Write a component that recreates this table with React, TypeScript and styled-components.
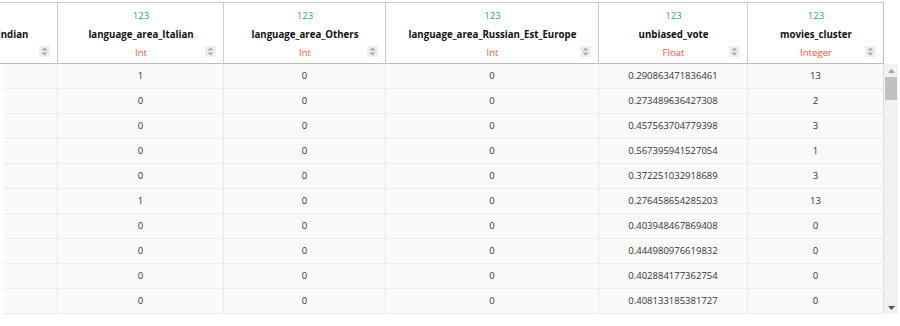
import React from 'react';
import styled, { createGlobalStyle } from 'styled-components';

const GlobalStyle = createGlobalStyle`
  html, body {
    margin: 0;
    padding: 0;
    background: #ffffff;
  }
  body {
    font-family: 'Open Sans', 'Noto Sans', sans-serif;
    color: #333;
  }
`;

type Column = {
  name: string;
  type: string;
  width: number;
  values: string[];
};

const zeros = Array(10).fill('0');

const columns: Column[] = [
  { name: 'language_area_Indian', type: 'Int', width: 164, values: zeros },
  { name: 'language_area_Italian', type: 'Int', width: 166, values: ['1', '0', '0', '0', '0', '1', '0', '0', '0', '0'] },
  { name: 'language_area_Others', type: 'Int', width: 162, values: zeros },
  { name: 'language_area_Russian_Est_Europe', type: 'Int', width: 213, values: zeros },
  {
    name: 'unbiased_vote',
    type: 'Float',
    width: 149,
    values: [
      '0.290863471836461',
      '0.273489636427308',
      '0.457563704779398',
      '0.567395941527054',
      '0.372251032918689',
      '0.276458654285203',
      '0.403948467869408',
      '0.444980976619832',
      '0.402884177362754',
      '0.408133185381727',
    ],
  },
  { name: 'movies_cluster', type: 'Integer', width: 136, values: ['13', '2', '3', '1', '3', '13', '0', '0', '0', '0'] },
];

// how far the grid is scrolled to the right
const SCROLL_X = 106;

const Page = styled.div`
  padding-top: 2px;
  width: 900px;
`;

const HeaderViewport = styled.div`
  width: 884px;
  overflow: hidden;
  border-top: 1px solid #c6c6c6;
  border-bottom: 1px solid #bdbdbd;
`;

const Track = styled.div<{ $shift: number }>`
  display: flex;
  flex: 1;
  margin-left: ${({ $shift }) => -$shift}px;
`;

const HeadCell = styled.div<{ $w: number }>`
  flex: 0 0 ${({ $w }) => $w}px;
  box-sizing: border-box;
  height: 60px;
  padding: 4px 7px 1px 8px;
  border-right: 1px solid #cfcfcf;
  display: flex;
  flex-direction: column;
  background: #fff;
  &:last-child {
    border-right-color: #bdbdbd;
  }
`;

const HeadLine = styled.div`
  height: 18px;
  line-height: 18px;
  text-align: center;
  white-space: nowrap;
`;

const KindIcon = styled(HeadLine)`
  color: #2ea87a;
  font-size: 9.6px;
`;

const ColName = styled(HeadLine)`
  height: 19px;
  line-height: 19px;
  color: #111;
  font-weight: 700;
  font-size: 9.7px;
`;

const TypeRow = styled.div`
  height: 18px;
  display: grid;
  grid-template-columns: 1fr auto 1fr;
  align-items: center;
`;

const TypeName = styled.span`
  grid-column: 2;
  color: #ff5533;
  font-size: 9.6px;
  line-height: 18px;
`;

const SortButton = styled.div`
  grid-column: 3;
  justify-self: end;
  align-self: start;
  margin-top: 2px;
  width: 11px;
  height: 11px;
  background: #efefef;
  display: flex;
  align-items: center;
  justify-content: center;
`;

const Body = styled.div`
  display: flex;
  height: 250px;
`;

const BodyViewport = styled.div`
  margin-left: 4px;
  width: 880px;
  overflow: hidden;
`;

const Row = styled.div`
  display: flex;
  height: 25px;
  box-sizing: border-box;
  border-bottom: 1px solid #ececec;
  background: #fafafa;
`;

const Cell = styled.div<{ $w: number }>`
  flex: 0 0 ${({ $w }) => $w}px;
  box-sizing: border-box;
  border-right: 1px solid #e9e9e9;
  text-align: center;
  line-height: 24px;
  font-size: 9.5px;
  color: #333;
  white-space: nowrap;
  overflow: hidden;
  &:last-child {
    border-right-color: #dcdcdc;
  }
`;

const Scrollbar = styled.div`
  width: 14px;
  background: #f1f1f1;
  display: flex;
  flex-direction: column;
`;

const ScrollArrow = styled.div`
  height: 13px;
  display: flex;
  align-items: center;
  justify-content: center;
`;

const ScrollTrack = styled.div`
  flex: 1;
  padding: 0 1px;
`;

const Thumb = styled.div`
  height: 23px;
  background: #c1c1c1;
`;

const SortIcon = () => (
  <svg width="7" height="9" viewBox="0 0 7 9">
    <path d="M3.5 0.5 L6.5 3.5 L0.5 3.5 Z" fill="#a9a9a9" />
    <path d="M0.5 5.5 L6.5 5.5 L3.5 8.5 Z" fill="#a9a9a9" />
  </svg>
);

const Arrow = ({ down }: { down?: boolean }) => (
  <svg width="7" height="4" viewBox="0 0 7 4">
    <path d={down ? 'M0 0 L7 0 L3.5 4 Z' : 'M3.5 0 L7 4 L0 4 Z'} fill={down ? '#505050' : '#a3a3a3'} />
  </svg>
);

const App = () => {
  const rows = columns[0].values.map((_, i) => i);

  return (
    <>
      <GlobalStyle />
      <Page>
        <HeaderViewport>
          <Track $shift={SCROLL_X}>
            {columns.map((c) => (
              <HeadCell key={c.name} $w={c.width}>
                <KindIcon>123</KindIcon>
                <ColName>{c.name}</ColName>
                <TypeRow>
                  <TypeName>{c.type}</TypeName>
                  <SortButton>
                    <SortIcon />
                  </SortButton>
                </TypeRow>
              </HeadCell>
            ))}
          </Track>
        </HeaderViewport>
        <Body>
          <BodyViewport>
            {rows.map((r) => (
              <Row key={r}>
                <Track $shift={SCROLL_X + 4}>
                  {columns.map((c) => (
                    <Cell key={c.name} $w={c.width}>
                      {c.values[r]}
                    </Cell>
                  ))}
                </Track>
              </Row>
            ))}
          </BodyViewport>
          <Scrollbar>
            <ScrollArrow>
              <Arrow />
            </ScrollArrow>
            <ScrollTrack>
              <Thumb />
            </ScrollTrack>
            <ScrollArrow>
              <Arrow down />
            </ScrollArrow>
          </Scrollbar>
        </Body>
      </Page>
    </>
  );
};

export default App;
